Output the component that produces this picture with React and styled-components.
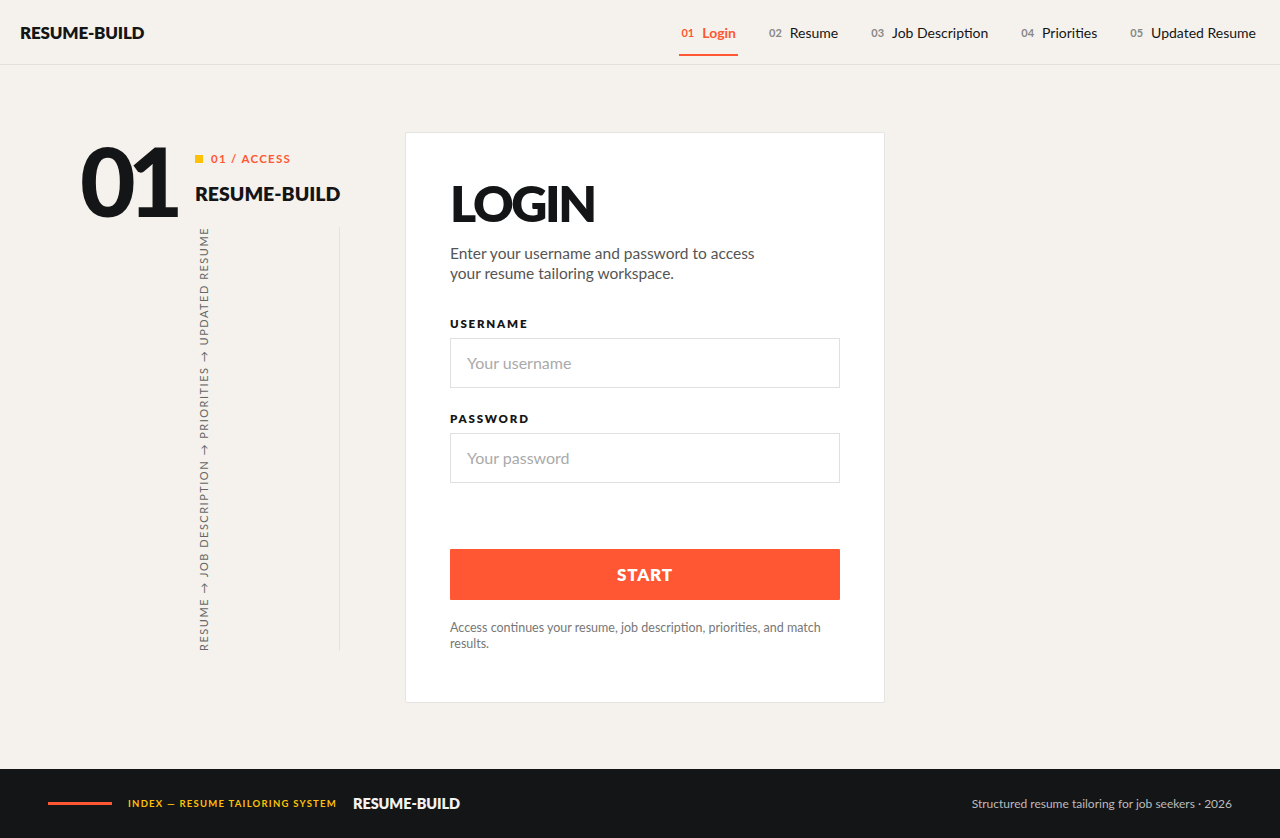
import styled, { createGlobalStyle } from 'styled-components';

const GlobalStyle = createGlobalStyle`
  * { box-sizing: border-box; }
  html, body { margin: 0; padding: 0; }
  body {
    font-family: Lato, "Liberation Sans", sans-serif;
    background: #f5f2ed;
    color: #151515;
  }
`;

const Page = styled.div`
  min-height: 838px;
  display: flex;
  flex-direction: column;
`;

const Header = styled.header`
  height: 65px;
  display: flex;
  align-items: stretch;
  justify-content: space-between;
  padding: 0 22px 0 20px;
  border-bottom: 1px solid #e2e0dc;
`;

const Logo = styled.div`
  display: flex;
  align-items: center;
  font-size: 17px;
  font-weight: 800;
  letter-spacing: -0.2px;
  color: #151515;
`;

const Nav = styled.nav`
  display: flex;
  gap: 29px;
`;

const NavItem = styled.a`
  display: flex;
  align-items: center;
  gap: 8px;
  padding: 10px 2px 0;
  margin-bottom: 8px;
  font-size: 14px;
  text-decoration: none;
  color: ${p => (p.$active ? '#ff5733' : '#151515')};
  font-weight: ${p => (p.$active ? 700 : 400)};
  border-bottom: 2px solid ${p => (p.$active ? '#ff5733' : 'transparent')};
`;

const NavNum = styled.span`
  font-size: 11px;
  font-weight: 700;
  color: ${p => (p.$active ? '#ff5733' : '#888')};
`;

const Main = styled.main`
  flex: 1;
  display: flex;
  align-items: center;
  padding: 0 80px;
  gap: 65px;
`;

const Aside = styled.aside`
  display: flex;
  gap: 20px;
  width: 260px;
  align-self: flex-start;
  margin-top: 68px;
`;

const BigNum = styled.div`
  width: 95px;
  font-size: 96px;
  font-weight: 900;
  line-height: 1;
  letter-spacing: -8px;
  color: #141517;
  margin-top: -1px;
`;

const SideBlock = styled.div`
  display: flex;
  flex-direction: column;
  width: 145px;
  padding-top: 19px;
`;

const Tag = styled.div`
  display: flex;
  align-items: center;
  gap: 8px;
  font-size: 11.5px;
  font-weight: 700;
  letter-spacing: 1.3px;
  color: #ff5733;
  white-space: nowrap;
`;

const Square = styled.span`
  width: 8px;
  height: 8px;
  background: #ffc107;
`;

const SideTitle = styled.div`
  margin-top: 17px;
  font-size: 19.5px;
  font-weight: 800;
  letter-spacing: 0;
  white-space: nowrap;
  color: #151515;
`;

const Flow = styled.div`
  margin-top: 22px;
  border-right: 1px solid #e6e2dc;
  display: flex;
`;

const FlowText = styled.span`
  writing-mode: vertical-rl;
  transform: rotate(180deg);
  font-size: 11px;
  letter-spacing: 1.5px;
  color: #666;
  margin-left: 2px;
  white-space: nowrap;
`;

const Card = styled.section`
  width: 480px;
  background: #fff;
  border: 1px solid #e6e4e0;
  border-radius: 2px;
  padding: 44px 44px 50px;
`;

const Title = styled.h1`
  margin: 0;
  font-size: 50px;
  font-weight: 800;
  line-height: 52px;
  letter-spacing: -2.4px;
  color: #141517;
`;

const Lead = styled.p`
  margin: 14px 0 0;
  max-width: 310px;
  font-size: 15.5px;
  line-height: 20px;
  color: #555;
`;

const Field = styled.label`
  display: block;
  margin-top: ${p => p.$top}px;
`;

const Label = styled.span`
  display: block;
  font-size: 11.5px;
  font-weight: 800;
  letter-spacing: 1.8px;
  color: #151515;
  margin-bottom: 8px;
`;

const Input = styled.input`
  display: block;
  width: 100%;
  height: 50px;
  border: 1px solid #e0e0e0;
  border-radius: 0;
  padding: 0 16px;
  font-family: inherit;
  font-size: 16px;
  color: #151515;
  background: #fff;
  outline: none;

  &::placeholder { color: #aaa; }
`;

const Button = styled.button`
  display: block;
  width: 100%;
  height: 51px;
  margin-top: 66px;
  border: 0;
  border-radius: 1px;
  background: #ff5733;
  color: #fff;
  font-family: inherit;
  font-size: 17px;
  font-weight: 800;
  letter-spacing: 0.8px;
  cursor: pointer;
`;

const Note = styled.p`
  margin: 20px 0 0;
  font-size: 12.5px;
  line-height: 16px;
  color: #777;
`;

const Footer = styled.footer`
  height: 69px;
  background: #141517;
  display: flex;
  align-items: center;
  justify-content: space-between;
  padding: 0 48px;
`;

const FooterLeft = styled.div`
  display: flex;
  align-items: center;
  gap: 16px;
`;

const Rule = styled.span`
  width: 64px;
  height: 3px;
  background: #ff5733;
`;

const FooterTag = styled.span`
  font-size: 9.5px;
  font-weight: 700;
  letter-spacing: 1.25px;
  color: #ffc107;
  white-space: nowrap;
`;

const FooterLogo = styled.span`
  font-size: 14.5px;
  font-weight: 800;
  letter-spacing: -0.1px;
  color: #f2f2f2;
`;

const FooterNote = styled.span`
  font-size: 12px;
  color: #bbb;
`;

const steps = [
  ['01', 'Login'],
  ['02', 'Resume'],
  ['03', 'Job Description'],
  ['04', 'Priorities'],
  ['05', 'Updated Resume'],
];

export default function App() {
  return (
    <Page>
      <GlobalStyle />
      <Header>
        <Logo>RESUME-BUILD</Logo>
        <Nav>
          {steps.map(([n, label], i) => (
            <NavItem key={n} href="#" $active={i === 0}>
              <NavNum $active={i === 0}>{n}</NavNum>
              {label}
            </NavItem>
          ))}
        </Nav>
      </Header>

      <Main>
        <Aside>
          <BigNum>01</BigNum>
          <SideBlock>
            <Tag><Square />01 / ACCESS</Tag>
            <SideTitle>RESUME-BUILD</SideTitle>
            <Flow>
              <FlowText>RESUME → JOB DESCRIPTION → PRIORITIES → UPDATED RESUME</FlowText>
            </Flow>
          </SideBlock>
        </Aside>

        <Card>
          <Title>LOGIN</Title>
          <Lead>Enter your username and password to access your resume tailoring workspace.</Lead>
          <Field $top={34}>
            <Label>USERNAME</Label>
            <Input placeholder="Your username" />
          </Field>
          <Field $top={24}>
            <Label>PASSWORD</Label>
            <Input type="password" placeholder="Your password" />
          </Field>
          <Button>START</Button>
          <Note>Access continues your resume, job description, priorities, and match results.</Note>
        </Card>
      </Main>

      <Footer>
        <FooterLeft>
          <Rule />
          <FooterTag>INDEX — RESUME TAILORING SYSTEM</FooterTag>
          <FooterLogo>RESUME-BUILD</FooterLogo>
        </FooterLeft>
        <FooterNote>Structured resume tailoring for job seekers · 2026</FooterNote>
      </Footer>
    </Page>
  );
}
